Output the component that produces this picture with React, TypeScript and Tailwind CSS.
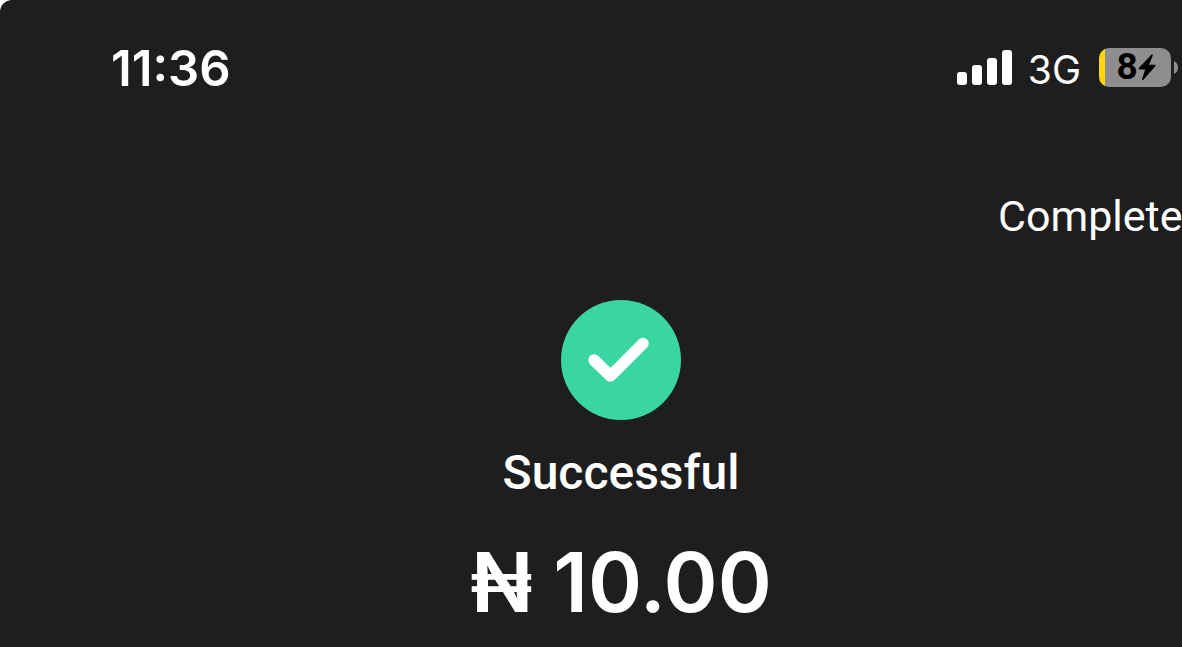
const signalBars = ["h-[13px]", "h-5", "h-[27px]", "h-[35px]"];

function SignalStrength() {
  return (
    <div className="flex items-end gap-[5px] pb-0.5" role="img" aria-label="Signal strength">
      {signalBars.map((height) => (
        <span key={height} className={`w-[10px] rounded-[3px] bg-white ${height}`} />
      ))}
    </div>
  );
}

function Battery() {
  return (
    <div className="flex items-center gap-[3px] pb-0.5">
      <div className="flex h-[39px] w-[72px] rounded-[10px] bg-[linear-gradient(to_right,#ffd60a_6px,#8e8e8e_6px)]">
        <div className="flex flex-1 items-center justify-center pl-[10px] pr-2 text-black">
          <span className="font-['Roboto',sans-serif] text-[37px] font-bold leading-[44px]">8</span>
          <svg width="18" height="27" viewBox="0 0 18 27" fill="currentColor" aria-hidden="true">
            <path d="M13.6 0.6 L0.8 14 Q0 15.4 1.5 15.4 H7.2 L4 25 Q4 26.8 5.4 25.8 L17.3 12.2 Q18 10.8 16.5 10.8 H11 L14.8 1.4 Q14.8 0 13.6 0.6 Z" />
          </svg>
        </div>
      </div>
      <svg width="4" height="13" viewBox="0 0 4 13" fill="#8e8e8e" aria-hidden="true">
        <path d="M0 0 Q4 2 4 6.500 Q4 11 0 13 Z" />
      </svg>
    </div>
  );
}

function StatusBar() {
  return (
    <div className="flex items-center justify-between pl-[111px] pr-1 font-['Inter',sans-serif] text-white">
      <time className="pt-0.5 text-[49px] font-semibold leading-[56px]">11:36</time>
      <div className="flex items-center">
        <SignalStrength />
        <span className="ml-4 mr-[18px] pt-1 text-[39px] leading-[56px]">3G</span>
        <Battery />
      </div>
    </div>
  );
}

export default function App() {
  return (
    <div className="min-h-screen overflow-hidden bg-white">
      <div className="min-h-screen overflow-hidden rounded-tl-[12px] bg-[#1e1e1e] pt-[38px] font-['Roboto',sans-serif] text-white">
        <StatusBar />

        <header className="flex justify-end pt-[94px]">
          <button type="button" className="w-[184px] whitespace-nowrap text-left text-[43px] leading-[48px]">
            Complete
          </button>
        </header>

        <main className="flex flex-col items-center pl-[60px] pt-[60px]">
          <svg width="120" height="120" viewBox="0 0 120 120" aria-hidden="true">
            <circle cx="60" cy="60" r="60" fill="#39d79f" />
            <path
              d="M33 60 L49.500 76 L82 43.500"
              fill="none"
              stroke="#fff"
              strokeWidth="11.500"
              strokeLinecap="round"
              strokeLinejoin="round"
            />
          </svg>
          <h1 className="mt-[25px] text-[48px] font-medium leading-[56px]">Successful</h1>
          <p className="mt-8 font-['Inter',sans-serif] text-[82px] font-semibold leading-[100px]">₦ 10.00</p>
        </main>
      </div>
    </div>
  );
}
